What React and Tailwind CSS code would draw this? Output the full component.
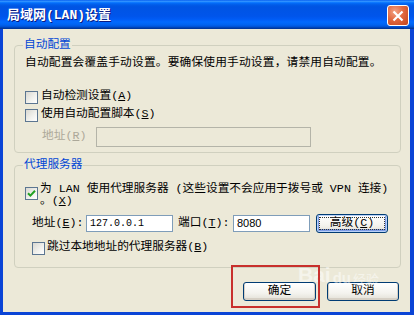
import React from "react";

const FONT = '"Liberation Mono", "Noto Sans CJK SC", monospace';

const Check = ({ checked }) => (
  <span className="w-[13px] h-[13px] shrink-0 border border-[#5C7691] bg-[linear-gradient(135deg,#d9d8d1_0%,#f2f2ee_60%,#ffffff_100%)] flex items-center justify-center">
    {checked && (
      <svg width="9" height="9" viewBox="0 0 9 9">
        <path d="M1 4.2 L3.4 6.6 L8 1.8" fill="none" stroke="#21A121" strokeWidth="2" />
      </svg>
    )}
  </span>
);

const Key = ({ k }) => (
  <>
    (<span className="underline underline-offset-1">{k}</span>)
  </>
);

const XpButton = ({ children, w, focused }) => (
  <button
    className={`h-[19px] ${w} rounded-[3px] border border-[#003C74] bg-[linear-gradient(#ffffff,#f4f3ee_60%,#e3e0d6)] text-black text-[11.7px] leading-none flex items-center justify-center p-[2px] ${
      focused ? "shadow-[inset_0_0_0_1px_#b9d1f8,inset_0_-1px_0_2px_#7d9ce6]" : "shadow-[inset_0_-1px_0_1px_#d6d0c5]"
    }`}
  >
    <span
      className={`w-full h-full flex items-center justify-center ${
        focused ? "outline-1 outline-dotted outline-[#333] -outline-offset-1" : ""
      }`}
    >
      {children}
    </span>
  </button>
);

export default function App() {
  return (
    <div
      className="relative w-[414px] h-[315px] overflow-hidden flex flex-col bg-[#0A44D6] text-black"
      style={{ fontFamily: FONT }}
    >
      {/* title bar */}
      <div className="h-[29px] shrink-0 flex items-start pl-[7px] pr-[5px] bg-[linear-gradient(#0058EE_0%,#3593FF_4%,#288EFF_6%,#127DFF_8%,#036FFC_10%,#0262EE_14%,#0057E5_20%,#0054E3_24%,#0055EB_56%,#005BF5_66%,#026AFE_76%,#0062EF_86%,#0052D6_92%,#0040AB_96%,#003092_100%)]">
        <span className="mt-[8px] text-white font-bold text-[13px] leading-[16px] [text-shadow:1px_1px_0_#0a1a80]">
          局域网(LAN)设置
        </span>
        <div className="flex-1" />
        <div className="mt-[5px] w-[22px] h-[21px] rounded-[3px] border border-white bg-[radial-gradient(circle_at_35%_30%,#f3a385_0%,#e2683f_45%,#c2441b_100%)] flex items-center justify-center">
          <svg width="12" height="12" viewBox="0 0 12 12">
            <path d="M1.5 1.5 L10.5 10.5 M10.5 1.5 L1.5 10.5" stroke="white" strokeWidth="2.2" />
          </svg>
        </div>
      </div>

      {/* body */}
      <div className="flex-1 ml-[3px] mr-[4px] mb-[3px] bg-[#ECE9D8] pt-[9px] pl-[11px] pr-[9px] text-[11.7px]">
        <fieldset className="border border-[#D0D0BF] rounded-[4px] px-[10px] pb-[5px]">
          <legend className="-ml-[2px] px-[1px] text-[#0046D5] leading-[14px]">自动配置</legend>
          <p className="mt-[2px] leading-[18px] whitespace-nowrap tracking-[0.2px]">
            自动配置会覆盖手动设置。要确保使用手动设置，请禁用自动配置。
          </p>
          <label className="mt-[16px] h-[18px] flex items-center gap-[3px]">
            <Check />
            <span className="whitespace-nowrap">
              自动检测设置<Key k="A" />
            </span>
          </label>
          <label className="h-[18px] flex items-center gap-[3px]">
            <Check />
            <span className="whitespace-nowrap">
              使用自动配置脚本<Key k="S" />
            </span>
          </label>
          <div className="mt-[3px] h-[20px] flex items-center">
            <span className="ml-[17px] w-[54px] text-[#ACA899] whitespace-nowrap">
              地址<Key k="R" />
            </span>
            <div className="w-[215px] h-[20px] border border-[#B4B4A8] bg-[#ECE9D8]" />
          </div>
        </fieldset>

        <fieldset className="mt-[5px] border border-[#D0D0BF] rounded-[4px] px-[10px] pb-[11px]">
          <legend className="-ml-[2px] px-[1px] text-[#0046D5] leading-[14px]">代理服务器</legend>
          <label className="mt-[11px] flex items-start gap-[2px]">
            <span className="mt-[4px]">
              <Check checked />
            </span>
            <span className="flex flex-col leading-[12px] whitespace-nowrap">
              <span>为 LAN 使用代理服务器 (这些设置不会应用于拨号或 VPN 连接)</span>
              <span>
                。<Key k="X" />
              </span>
            </span>
          </label>
          <div className="mt-[8px] h-[17px] flex items-center">
            <span className="ml-[7px] w-[54px] whitespace-nowrap">
              地址<Key k="E" />:
            </span>
            <div className="w-[87px] h-[17px] border border-[#7F9DB9] bg-white flex items-center pl-[3px] text-[10px] font-['Liberation_Mono',monospace]">
              127.0.0.1
            </div>
            <span className="ml-[5px] w-[55px] whitespace-nowrap">
              端口<Key k="T" />:
            </span>
            <div className="w-[77px] h-[17px] border border-[#7F9DB9] bg-white flex items-center pl-[3px] text-[11px] font-['Liberation_Sans',sans-serif]">
              8080
            </div>
            <span className="ml-[6px]">
              <XpButton w="w-[72px]" focused>
                高级<Key k="C" />
              </XpButton>
            </span>
          </div>
          <label className="mt-[8px] h-[16px] flex items-center gap-[2px] ml-[7px]">
            <Check />
            <span className="whitespace-nowrap">
              跳过本地地址的代理服务器<Key k="B" />
            </span>
          </label>
        </fieldset>

        <div className="mt-[14px] mr-[2px] flex justify-end gap-[11px]">
          <XpButton w="w-[73px]">确定</XpButton>
          <XpButton w="w-[72px]">取消</XpButton>
        </div>
      </div>

      {/* watermark */}
      <div className="absolute left-[298px] top-[264px] flex items-end gap-[2px] text-white/50 pointer-events-none font-['Liberation_Sans',sans-serif]">
        <span className="text-[21px] font-bold leading-none">Bai</span>
        <span className="text-[15px] font-bold leading-none">du</span>
        <span className="text-[13px] leading-none" style={{ fontFamily: '"Noto Sans CJK SC", sans-serif' }}>
          经验
        </span>
      </div>

      {/* annotation box */}
      <div className="absolute left-[231px] top-[265px] w-[89px] h-[43px] border-2 border-[#C8302C] pointer-events-none" />
    </div>
  );
}
